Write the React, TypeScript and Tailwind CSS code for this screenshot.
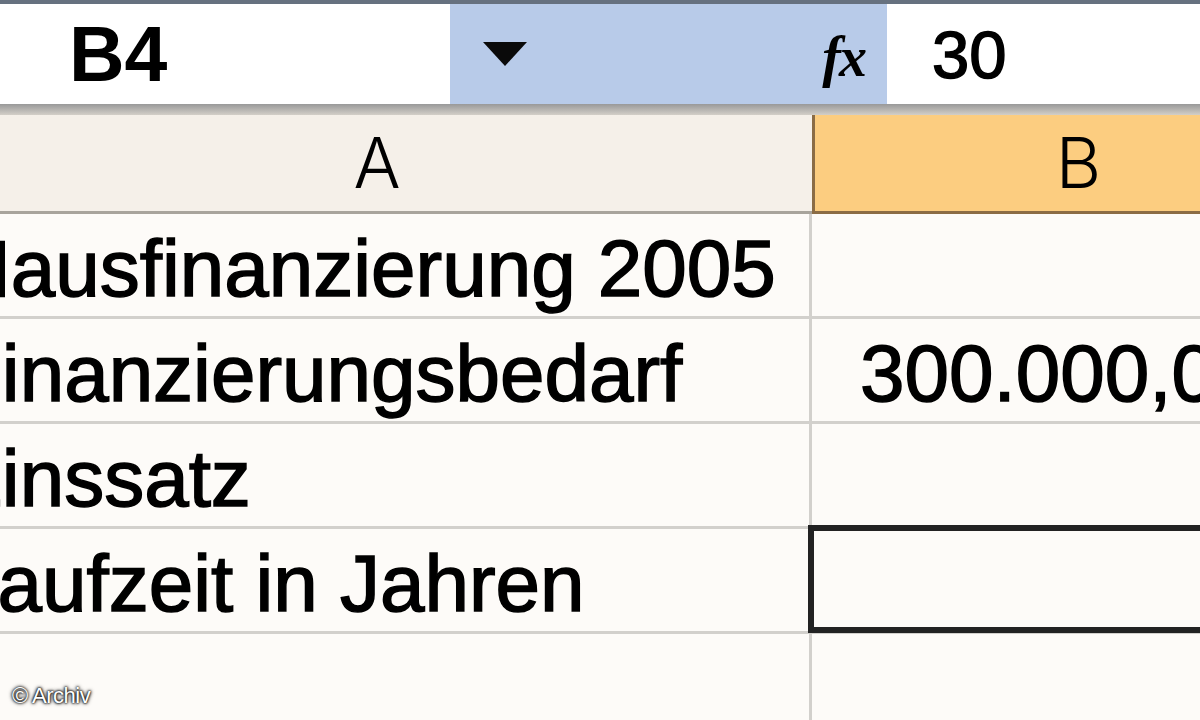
import React from 'react'

const rows = [
  { a: 'Hausfinanzierung 2005', b: '' },
  { a: 'Finanzierungsbedarf', b: '300.000,00 €' },
  { a: 'Zinssatz', b: '' },
  { a: 'Laufzeit in Jahren', b: '', selected: true },
  { a: '', b: '' },
]

function Triangle() {
  return (
    <svg width="44" height="24" viewBox="0 0 44 24">
      <polygon points="0,0 44,0 22,24" fill="#0a0a0a" />
    </svg>
  )
}

export default function App() {
  return (
    <div className="relative w-[1200px] h-[720px] overflow-hidden bg-[#fdfbf8] font-['Liberation_Sans',Arial,sans-serif] text-black">
      <div className="h-[4px] bg-[#66717f]" />

      {/* formula bar */}
      <div className="flex h-[100px]">
        <div className="w-[450px] bg-white flex items-center pl-[69px]">
          <span className="text-[77px] leading-none font-bold">B4</span>
        </div>
        <div className="w-[437px] bg-[#b8cbe9] flex items-center">
          <div className="pl-[33px]">
            <Triangle />
          </div>
          <div className="flex-1" />
          <span className="pr-[22px] pt-[6px] text-[56px] leading-none italic font-bold font-['Liberation_Serif',serif] tracking-[-2px]">
            fx
          </span>
        </div>
        <div className="flex-1 bg-white flex items-center pl-[45px]">
          <span className="text-[67px] leading-none [-webkit-text-stroke:1.5px_#000]">30</span>
        </div>
      </div>
      <div className="h-[11px] bg-gradient-to-b from-[#999999] to-[#d3cfc8]" />

      {/* column headers */}
      <div className="flex h-[99px]">
        <div className="w-[812px] shrink-0 bg-[#f5f0e9] border-b-[3px] border-[#a8a49c] flex items-center justify-center pr-[58px]">
          <span className="text-[70px] leading-none font-['Inter',sans-serif] font-light">A</span>
        </div>
        <div className="w-[530px] shrink-0 bg-[#fccd80] border-l-[3px] border-b-[3px] border-[#8b6c45] flex items-center justify-center">
          <span className="text-[70px] leading-none font-['Inter',sans-serif] font-light">B</span>
        </div>
      </div>

      {/* rows */}
      {rows.map((r, i) => (
        <div key={i} className="flex h-[105px]">
          <div className="w-[812px] shrink-0 border-b-[3px] border-r-[3px] border-[#d2d0cc] overflow-hidden">
            <div className="ml-[-47px] pt-[15px] text-[80px] leading-[80px] whitespace-nowrap [-webkit-text-stroke:1.5px_#000]">
              {r.a}
            </div>
          </div>
          <div className="relative w-[530px] shrink-0 border-b-[3px] border-[#d2d0cc]">
            <div className="pl-[48px] pt-[15px] text-[80px] leading-[80px] whitespace-nowrap [-webkit-text-stroke:1.5px_#000]">
              {r.b}
            </div>
            {r.selected && (
              <div className="absolute top-[-4px] left-[-4px] right-0 bottom-[-2px] border-[6px] border-[#222222]" />
            )}
          </div>
        </div>
      ))}

      <div className="absolute left-[12px] bottom-[8px] text-[22px] text-white tracking-[-0.5px] [text-shadow:0_0_2px_#000,0_0_3px_#000,0_0_4px_#222]">
        © Archiv
      </div>
    </div>
  )
}
